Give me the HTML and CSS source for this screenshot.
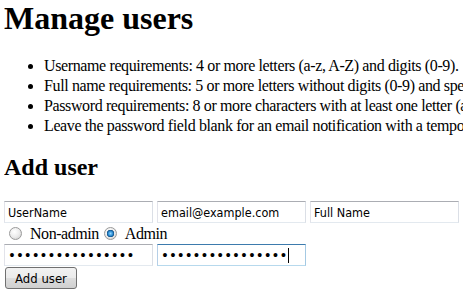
FILE: index.html
```html
<!DOCTYPE html>
<html>
<head>
<meta charset="utf-8">
<title>Manage users</title>
<link rel="stylesheet" href="styles.css">
</head>
<body>
<h1 class="title">Manage users</h1>
<ul class="reqs">
<li>Username requirements: 4 or more letters (a-z, A-Z) and digits (0-9).</li>
<li>Full name requirements: 5 or more letters without digits (0-9) and special characters.</li>
<li>Password requirements: 8 or more characters with at least one letter (a-z, A-Z) and one digit (0-9).</li>
<li>Leave the password field blank for an email notification with a temporary password.</li>
</ul>
<h2 class="subtitle">Add user</h2>
<form class="add-form">
<div class="row">
<input class="field" type="text" value="UserName">
<input class="field" type="text" value="email@example.com">
<input class="field" type="text" value="Full Name">
</div>
<div class="row roles">
<label class="role"><input class="radio" type="radio" name="role">Non-admin</label>
<label class="role"><input class="radio" type="radio" name="role" checked>Admin</label>
</div>
<div class="row">
<input class="field pass" type="password" value="passwordpassword">
<span class="caret-wrap"><input class="field pass focused" type="password" value="passwordpassword"><span class="caret"></span></span>
</div>
<div class="row actions">
<button class="btn" type="button">Add user</button>
</div>
</form>
</body>
</html>
```
FILE: styles.css
```css
html {
  overflow: hidden;
}
body {
  margin: 0 4px;
  font-family: "Liberation Serif", "Times New Roman", serif;
  font-size: 16px;
  color: #000;
  background: #fff;
}
.title {
  margin: 0;
  font-size: 32px;
  font-weight: bold;
}
.reqs {
  margin: 19px 0 0;
  padding-left: 40px;
  line-height: 20px;
  white-space: nowrap;
  letter-spacing: -0.38px;
}
.subtitle {
  margin: 18px 0 20px;
  font-size: 24px;
  font-weight: bold;
}
.add-form {
  margin: 0;
}
.row {
  display: flex;
  gap: 4px;
  height: 22px;
}
.field {
  box-sizing: border-box;
  width: 149px;
  height: 22px;
  margin: 0;
  padding: 0 3px;
  border: 1px solid;
  border-color: #abadb3 #dbdfe6 #e3e9ef #e2e3ea;
  border-radius: 0;
  font-family: "DejaVu Sans Condensed", "DejaVu Sans", sans-serif;
  font-size: 12.5px;
  color: #000;
  background: #fff;
  outline: none;
}
.pass {
  font-family: "DejaVu Sans", sans-serif;
  font-size: 13.4px;
}
.focused {
  border-color: #3d7bad #a4c9e3 #b7d9ed #b5cfe7;
}
.caret-wrap {
  position: relative;
  display: block;
}
.caret {
  position: absolute;
  left: 131px;
  top: 4px;
  width: 1px;
  height: 15px;
  background: #000;
}
.roles {
  height: 21px;
  align-items: center;
  gap: 0;
}
.role {
  display: flex;
  align-items: center;
  letter-spacing: -0.45px;
}
.radio {
  appearance: none;
  -webkit-appearance: none;
  box-sizing: border-box;
  width: 13px;
  height: 13px;
  margin: 0 8px 0 5px;
  border: 1px solid #9a9a9a;
  border-radius: 50%;
  background: radial-gradient(circle at 40% 35%, #ffffff 0%, #ececec 50%, #c9c9c9 100%);
}
.radio:checked {
  background:
    radial-gradient(circle at 50% 50%, #8fd6ff 0%, #2b8ad0 30%, #0c4c82 45%, transparent 50%),
    radial-gradient(circle at 40% 35%, #ffffff 0%, #ececec 50%, #c9c9c9 100%);
}
.actions {
  margin-top: 1px;
}
.btn {
  box-sizing: border-box;
  width: 72px;
  height: 22px;
  margin: 0 0 0 1px;
  padding: 0;
  border: 1px solid #707070;
  border-radius: 3px;
  background: linear-gradient(#f2f2f2 0%, #ebebeb 48%, #dddddd 52%, #cfcfcf 100%);
  font-family: "DejaVu Sans Condensed", "DejaVu Sans", sans-serif;
  font-size: 13px;
  color: #000;
}
```
